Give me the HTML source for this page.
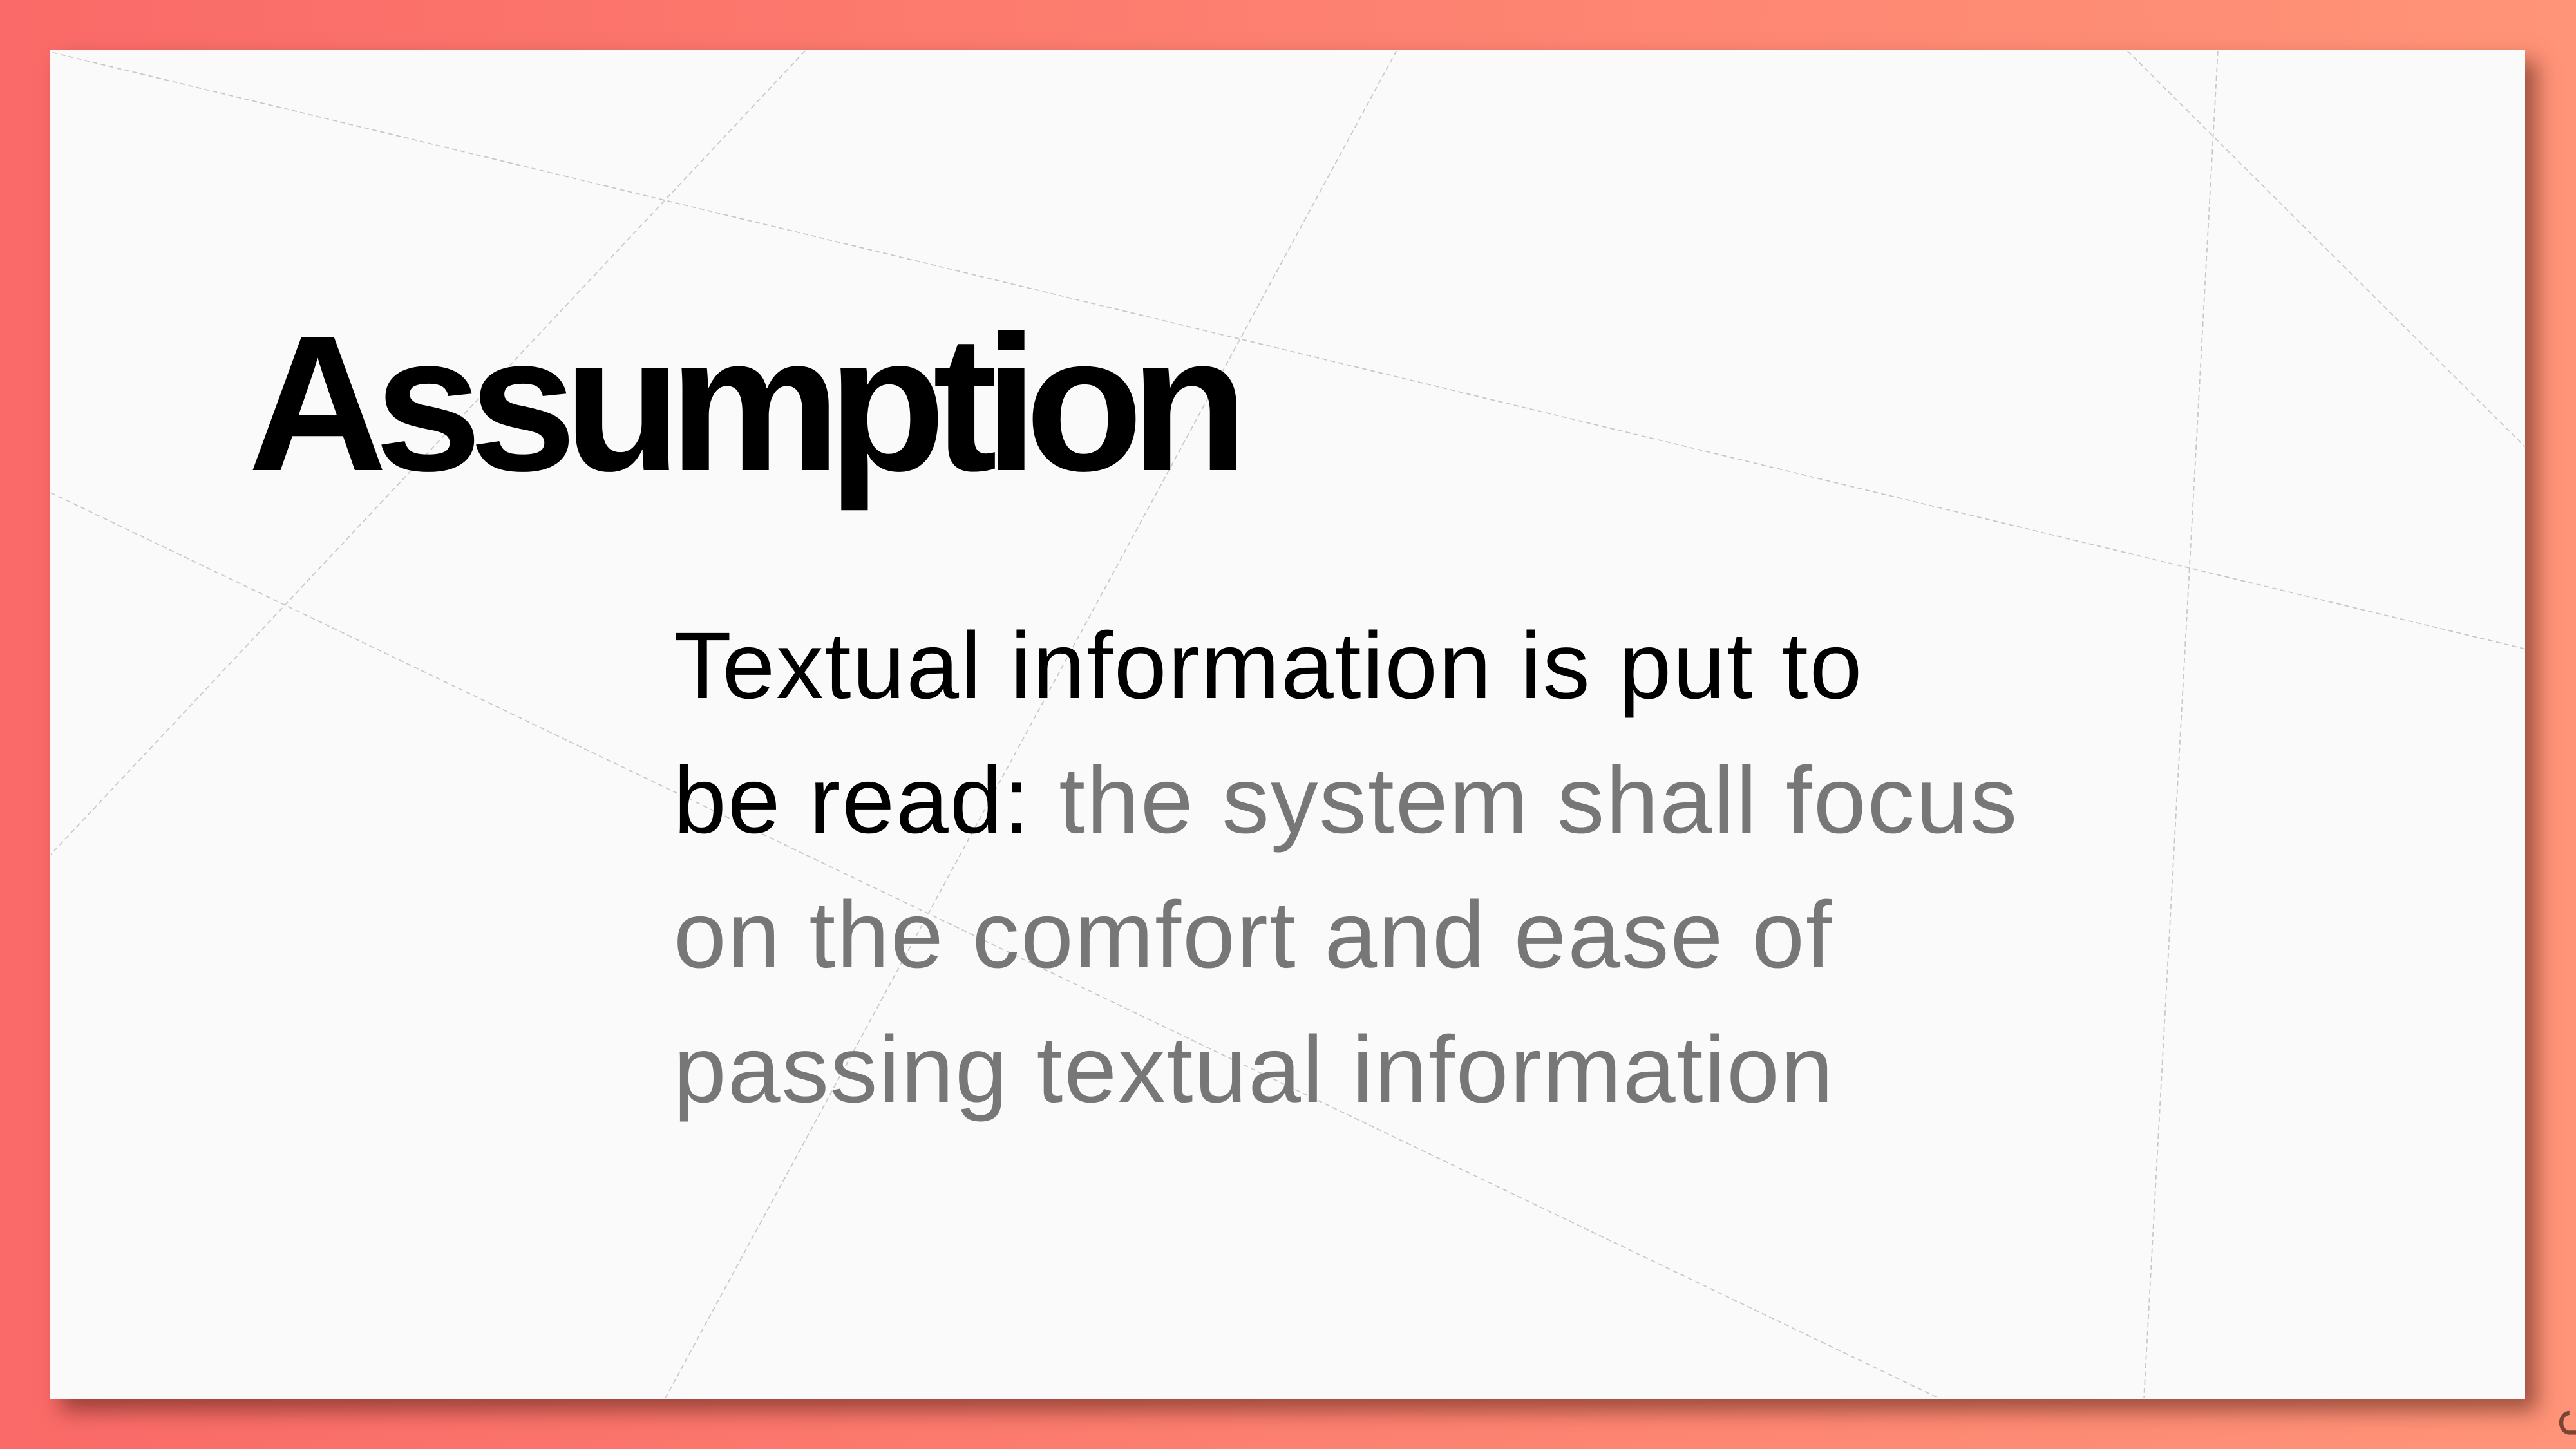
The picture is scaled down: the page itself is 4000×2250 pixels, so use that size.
<!DOCTYPE html>
<html><head><meta charset="utf-8"><style>
html,body{margin:0;padding:0}
body{width:4000px;height:2250px;overflow:hidden;position:relative;
background:linear-gradient(90deg,#fa6a68 0%,#fd8070 50%,#ff9478 100%);}
.card{position:absolute;left:77px;top:77px;width:3844px;height:2096px;background:#fafafa;
box-shadow:18px 18px 30px rgba(80,30,20,0.55);}
svg.lines{position:absolute;left:0;top:0}
h1{position:absolute;left:385px;top:476px;margin:0;font-family:"Liberation Sans",sans-serif;font-weight:bold;
font-size:300px;line-height:300px;letter-spacing:-20px;color:#000;}
.body{position:absolute;left:1046px;top:930px;font-family:"Liberation Sans",sans-serif;font-size:147px;
line-height:209px;letter-spacing:2px;color:#777;white-space:nowrap}
.body b{font-weight:normal;color:#000}
</style></head><body>
<div class="card"></div>
<svg class="lines" width="4000" height="2250" viewBox="0 0 1568 882">
<g stroke="#c8c8c8" stroke-width="0.7" stroke-dasharray="3,2" fill="none">
<line x1="32" y1="32" x2="1537" y2="395"/>
<line x1="490" y1="31" x2="31" y2="520"/>
<line x1="850" y1="31" x2="405" y2="851"/>
<line x1="1295" y1="31" x2="1537" y2="272"/>
<line x1="1350" y1="31" x2="1305" y2="851"/>
<line x1="31" y1="300" x2="1180" y2="851"/>
</g>
<path d="M1564 860 a5 6 0 0 0 0 12 h4" stroke="#7a4535" stroke-width="2.5" fill="none"/>
</svg>
<h1>Assumption</h1>
<div class="body"><b>Textual information is put to<br>be read:</b> the system shall focus<br>on the comfort and ease of<br>passing textual information</div>
</body></html>
